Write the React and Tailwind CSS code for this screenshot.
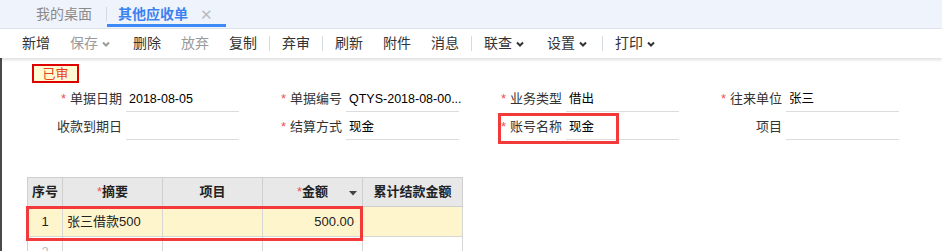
import React from "react";

const FONT = { fontFamily: '"Liberation Sans", "Noto Sans CJK SC", sans-serif' };

const Chevron = ({ color = "#333" }) => (
  <svg width="8" height="6" viewBox="0 0 8 6" className="ml-[4px]">
    <polyline points="1,1.5 4,4.5 7,1.5" fill="none" stroke={color} strokeWidth="2" />
  </svg>
);

const ToolBtn = ({ label, disabled, menu }) => (
  <div
    className={`flex items-center h-full pl-[10px] ${menu ? "pr-[13px]" : "pr-[10px]"} text-[14px] ${
      disabled ? "text-[#9a9a9a]" : "text-[#333]"
    }`}
  >
    <span>{label}</span>
    {menu && <Chevron color={disabled ? "#9a9a9a" : "#333"} />}
  </div>
);

const Sep = () => <div className="w-px h-[15px] bg-[#d6dbe3] mx-[2px]" />;

const Field = ({ label, required, value }) => (
  <div className="flex w-[220px] h-[26px]">
    <div className="w-[107px] pr-[4px] text-right text-[13px] text-[#333] leading-[26px]">
      {required && <span className="text-[#f05050] mr-[4px]">*</span>}
      {label}
    </div>
    <div className="w-[113px] border-b border-[#dcdcdc] pl-[3px] text-[12.5px] text-black leading-[26px] whitespace-nowrap">
      {value}
    </div>
  </div>
);

const cols = ["w-[35px]", "w-[100px]", "w-[100px]", "w-[100px]", "w-[100px]"];

export default function App() {
  return (
    <div className="relative w-[942px] h-[251px] overflow-hidden bg-white" style={FONT}>
      {/* tab bar */}
      <div className="flex h-[29px] bg-[#eff3fb] border-b border-[#dfe4ec]">
        <div className="flex items-center pl-[36px] pr-[14px] text-[14px] text-[#8a8a8a]">我的桌面</div>
        <div className="w-px h-[14px] bg-[#d3d9e3] self-center" />
        <div className="relative flex items-center pl-[11px] pr-[13px]">
          <span className="text-[14px] font-bold text-[#3b82f0]">其他应收单</span>
          <span className="ml-[12px] text-[#b8bcc4] text-[15px] leading-none">✕</span>
          <div className="absolute left-0 right-0 bottom-[1px] h-[3px] bg-[#3b8af5]" />
        </div>
      </div>

      {/* toolbar */}
      <div className="relative z-10 flex items-center h-[29px] pl-[12px] bg-white shadow-[0_2px_3px_rgba(0,0,0,0.13)]">
        <ToolBtn label="新增" />
        <ToolBtn label="保存" disabled menu />
        <ToolBtn label="删除" />
        <ToolBtn label="放弃" disabled />
        <ToolBtn label="复制" />
        <Sep />
        <ToolBtn label="弃审" />
        <Sep />
        <ToolBtn label="刷新" />
        <ToolBtn label="附件" />
        <ToolBtn label="消息" />
        <Sep />
        <ToolBtn label="联查" menu />
        <ToolBtn label="设置" menu />
        <Sep />
        <ToolBtn label="打印" menu />
      </div>

      {/* content */}
      <div className="h-[193px] border-l-2 border-[#4a4a4a] pt-[6px]">
        <div className="ml-[30px] w-[47px] h-[19px] border-2 border-[#e00000] bg-[#fffbd2] flex items-center justify-center text-[13px] text-[#e8401c] leading-none">
          已审
        </div>

        <div className="mt-[3px] pl-[17px]">
          <div className="flex">
            <Field label="单据日期" required value="2018-08-05" />
            <Field label="单据编号" required value="QTYS-2018-08-00..." />
            <Field label="业务类型" required value="借出" />
            <Field label="往来单位" required value="张三" />
          </div>
          <div className="flex mt-[2px]">
            <Field label="收款到期日" value="" />
            <Field label="结算方式" required value="现金" />
            <Field label="账号名称" required value="现金" />
            <Field label="项目" value="" />
          </div>
        </div>

        {/* grid */}
        <div className="ml-[25px] mt-[37px] w-[436px] border-t border-l border-[#cfcfcf] text-[13px]">
          <div className="flex h-[29px] bg-[#e8e8e8] font-bold text-[#222]">
            {["序号", "*摘要", "项目", "*金额", "累计结款金额"].map((h, i) => (
              <div
                key={i}
                className={`${cols[i]} relative flex items-center justify-center border-r border-b border-[#cfcfcf]`}
              >
                {h.startsWith("*") ? (
                  <>
                    <span className="text-[#f05050] font-normal">*</span>
                    {h.slice(1)}
                  </>
                ) : (
                  h
                )}
                {i === 3 && (
                  <svg width="8" height="5" viewBox="0 0 8 5" className="absolute right-[5px] top-[13px]">
                    <polygon points="0,0 8,0 4,4.5" fill="#444" />
                  </svg>
                )}
              </div>
            ))}
          </div>
          <div className="flex h-[30px] bg-[#fff5cc] text-[#222]">
            <div className={`${cols[0]} flex items-center justify-center border-r border-b border-[#d6d6d6]`}>1</div>
            <div className={`${cols[1]} flex items-center pl-[4px] border-r border-b border-[#d6d6d6]`}>张三借款500</div>
            <div className={`${cols[2]} border-r border-b border-[#d6d6d6]`} />
            <div className={`${cols[3]} flex items-center justify-end pr-[8px] border-r border-b border-[#d6d6d6]`}>500.00</div>
            <div className={`${cols[4]} border-r border-b border-[#d6d6d6]`} />
          </div>
          <div className="flex h-[30px] bg-white text-[#bbb]">
            <div className={`${cols[0]} flex items-center justify-center border-r border-[#d6d6d6]`}>2</div>
            <div className={`${cols[1]} border-r border-[#d6d6d6]`} />
            <div className={`${cols[2]} border-r border-[#d6d6d6]`} />
            <div className={`${cols[3]} border-r border-[#d6d6d6]`} />
            <div className={`${cols[4]} border-r border-[#d6d6d6]`} />
          </div>
        </div>
      </div>

      {/* annotation boxes */}
      <div className="absolute left-[498px] top-[113px] w-[121px] h-[31px] border-[3px] border-[#f23a3a]" />
      <div className="absolute left-[26px] top-[206px] w-[337px] h-[35px] border-[3px] border-[#f23a3a]" />
    </div>
  );
}
